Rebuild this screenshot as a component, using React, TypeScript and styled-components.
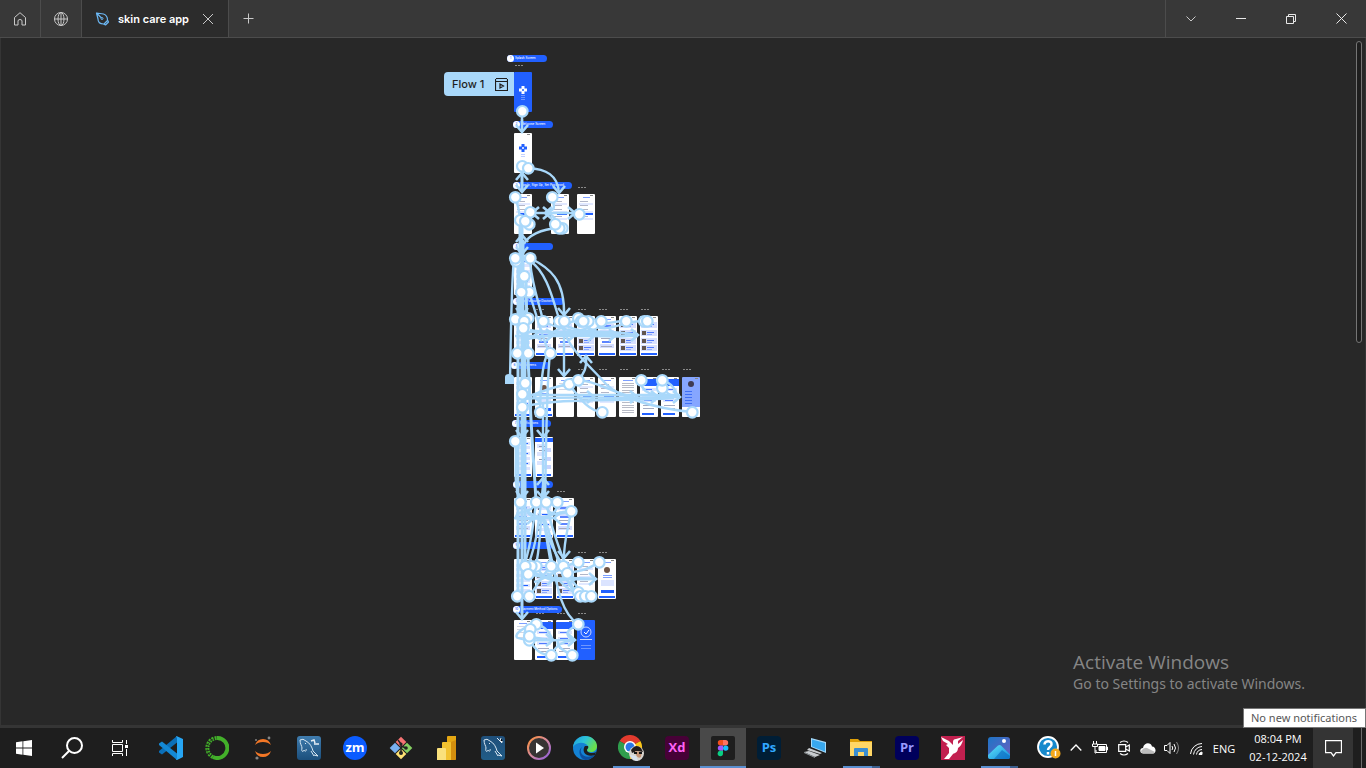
import React from "react";
import styled, { createGlobalStyle } from "styled-components";

const GlobalStyle = createGlobalStyle`
  * { box-sizing: border-box; }
  html, body, #root { height: 100%; }
  body { margin: 0; background: #282828; overflow: hidden; }
  button { font: inherit; color: inherit; border: 0; padding: 0; background: none; cursor: default; }
`;

const wire = "#a9d8fa";
const blue = "#2160ff";
const ui = `"Open Sans", "Noto Sans", sans-serif`;

const Desktop = styled.div`
  display: flex;
  flex-direction: column;
  height: 100vh;
  font-family: Inter, sans-serif;
  color: #fff;
`;

/* ---------- Title bar ---------- */

const TabBar = styled.header`
  display: flex;
  flex: none;
  height: 38px;
  background: #383838;
  border-bottom: 1px solid #4c4c4c;
`;

const BarButton = styled.button<{ $width: number; $edge?: "left" | "right" }>`
  display: flex;
  align-items: center;
  justify-content: center;
  width: ${(p) => p.$width}px;
  color: #c9c9c9;
  ${(p) => p.$edge && `border-${p.$edge}: 1px solid #4c4c4c;`}
`;

const FileTab = styled.div`
  display: flex;
  align-items: center;
  gap: 8px;
  width: 147px;
  padding: 0 14px 0 13px;
  background: #2c2c2c;
  border-right: 1px solid #4c4c4c;
`;

const FileName = styled.span`
  flex: 1;
  font-size: 11px;
  font-weight: 600;
  line-height: 16px;
  white-space: nowrap;
`;

const CloseTab = styled.button`
  display: flex;
  color: #c9c9c9;
`;

const Spacer = styled.div`
  flex: 1;
`;

const WindowControls = styled.div`
  display: flex;
  border-left: 1px solid #4c4c4c;
`;

const Line = styled.svg.attrs({ fill: "none", stroke: "currentColor", "aria-hidden": true })`
  display: block;
  flex: none;
`;

/* ---------- Canvas ---------- */

const Canvas = styled.main`
  position: relative;
  flex: 1;
  min-height: 0;
  overflow: hidden;
  background: #282828;
  border: solid #353535;
  border-width: 0 1px 3px;
`;

const Scrollbar = styled.div`
  position: absolute;
  top: 3px;
  right: 3px;
  width: 6px;
  height: 302px;
  border: 1px solid #757575;
  border-radius: 3px;
  background: #1e1e1e;
`;

const Board = styled.div`
  position: absolute;
  inset: 0;
`;

const Phone = styled.svg`
  position: absolute;
  width: 18px;
  height: 40px;
  border-radius: 1px;
`;

const SectionLabel = styled.div`
  position: absolute;
  display: flex;
  align-items: center;
  gap: 1px;
  height: 7px;
  border-radius: 4px;
  background: ${blue};
  font-size: 3px;
  font-weight: 500;
  line-height: 7px;
  white-space: nowrap;
  color: #fff;
`;

const SectionBadge = styled.span`
  flex: none;
  width: 7px;
  height: 7px;
  border-radius: 50%;
  background: #fff;
  color: ${blue};
  text-align: center;
`;

const FrameTitle = styled.span`
  position: absolute;
  width: 9px;
  height: 1px;
  background: repeating-linear-gradient(90deg, #8a8a8a 0 2px, transparent 2px 3px);
`;

const FlowStart = styled.button`
  position: absolute;
  display: flex;
  align-items: center;
  justify-content: space-between;
  width: 70px;
  height: 24px;
  padding: 0 6px 0 8px;
  border-radius: 4px 0 0 4px;
  background: ${wire};
  color: #1e1e1e;
  font-size: 11px;
  font-weight: 500;
`;

const Wires = styled.svg`
  position: absolute;
  top: 0;
  left: 0;
  pointer-events: none;
`;

const Watermark = styled.aside`
  position: absolute;
  right: 60px;
  bottom: 31px;
  color: #858585;
`;

const WatermarkTitle = styled.p`
  margin: 0;
  font-family: ${ui};
  font-size: 19px;
  line-height: 24px;
`;

const WatermarkText = styled.p`
  margin: 0;
  font-family: "Noto Sans", sans-serif;
  font-size: 14px;
  line-height: 20px;
`;

/* ---------- Taskbar ---------- */

const Taskbar = styled.footer`
  position: relative;
  display: flex;
  flex: none;
  height: 40px;
  background: #1e1e1e;
  font-family: ${ui};
`;

const SystemButton = styled.button`
  display: flex;
  align-items: center;
  justify-content: center;
  width: 48px;
`;

const Apps = styled.nav`
  display: flex;
  padding-left: 4px;
`;

const AppButton = styled.button<{ $state?: "running" | "active" | "grouped" }>`
  display: flex;
  align-items: center;
  justify-content: center;
  width: 46px;
  background: ${(p) => {
    if (p.$state === "active") return "linear-gradient(#5a8fd0, #5a8fd0) 0 38px / 100% 2px no-repeat #494949";
    if (p.$state === "running") return "linear-gradient(#5a8fd0, #5a8fd0) 5px 38px / 37px 2px no-repeat";
    if (p.$state === "grouped")
      return "linear-gradient(90deg, #5a8fd0 0 29px, #3c5f8e 29px) 5px 38px / 37px 2px no-repeat";
    return "none";
  }};
`;

const AppTile = styled.span<{ $bg: string; $fg: string; $round?: boolean }>`
  width: 24px;
  height: 24px;
  border-radius: ${(p) => (p.$round ? 12 : 4)}px;
  background: ${(p) => p.$bg};
  color: ${(p) => p.$fg};
  font-size: 13px;
  font-weight: 700;
  line-height: 22px;
  text-align: center;
`;

const Tray = styled.div`
  display: flex;
  align-items: center;
`;

const TrayButton = styled.button<{ $width?: number }>`
  display: flex;
  align-items: center;
  justify-content: center;
  width: ${(p) => p.$width ?? 24}px;
  height: 40px;
`;

const Language = styled.button`
  width: 32px;
  font-size: 11px;
`;

const Clock = styled.time`
  width: 73px;
  padding-left: 3px;
  font-size: 11px;
  line-height: 18px;
  text-align: center;
  white-space: nowrap;
`;

const Notifications = styled.button`
  display: flex;
  align-items: center;
  justify-content: center;
  width: 40px;
  height: 40px;
  margin-right: 8px;
  background: #343434;
`;

const ShowDesktop = styled.button`
  width: 5px;
  height: 40px;
  border-left: 1px solid #6b6b6b;
`;

const Tooltip = styled.div`
  position: absolute;
  right: 0;
  bottom: 40px;
  height: 20px;
  padding: 0 8px 0 7px;
  border: 1px solid #767676;
  background: #fff;
  color: #575757;
  font-family: "Noto Sans", sans-serif;
  font-size: 11px;
  line-height: 18px;
  white-space: nowrap;
`;

/* ---------- Board data (window coordinates, offset by the title bar) ---------- */

const ORIGIN = 38;

type Kind = "splash" | "welcome" | "form" | "list" | "cards" | "doctors" | "text" | "plain" | "banner" | "menu" | "profile" | "done" | "chat";

const phones: [number, number, Kind][] = [
  [513, 72, "splash"],
  [513, 133, "welcome"],
  [513, 194, "form"], [550, 194, "form"], [576, 194, "form"],
  [513, 255, "list"],
  [513, 316, "list"], [534, 316, "cards"], [555, 316, "cards"], [576, 316, "doctors"], [597, 316, "cards"], [618, 316, "doctors"], [639, 316, "doctors"],
  [513, 377, "list"], [534, 377, "profile"], [555, 377, "plain"], [576, 377, "form"], [597, 377, "form"], [618, 377, "text"], [639, 377, "banner"], [660, 377, "banner"], [681, 377, "menu"],
  [513, 437, "list"], [534, 437, "chat"],
  [513, 498, "cards"], [534, 498, "list"], [555, 498, "cards"],
  [513, 559, "list"], [534, 559, "doctors"], [555, 559, "doctors"], [576, 559, "form"], [597, 559, "profile"],
  [513, 620, "plain"], [534, 620, "banner"], [555, 620, "banner"], [576, 620, "done"],
];

const labels: [number, number, number, string][] = [
  [507, 55, 40, "Splash Screen"],
  [513, 121, 40, "Welcome Screen"],
  [513, 182, 59, "Log In, Sign Up, Set Password"],
  [513, 243, 40, ""],
  [513, 298, 51, "Top Favourite Doctors"],
  [511, 362, 39, "My Screens"],
  [512, 420, 39, "Notifications"],
  [513, 481, 40, ""],
  [513, 542, 40, ""],
  [513, 606, 49, "Payment Method Options"],
];

const titles: [number, number][] = [
  [514, 65], [577, 187],
  [535, 309], [577, 309], [598, 309], [619, 309], [640, 309],
  [577, 369], [598, 369], [619, 369], [640, 369], [661, 369], [682, 369],
  [556, 491], [577, 552], [598, 552],
  [535, 613], [556, 613], [577, 613],
];

const wires: string[] = [
  "M522 111V131", "M522 125V119",
  "M528 168C546 169 558 175 559 193",
  "M515 197C518 204 519 208 520 220", "M530 213H579", "M552 197C554 208 557 208 547 213", "M555 224C558 221 554 216 548 213",
  "M559 228C540 229 528 236 524 244",
  "M514 258C511 290 511 340 510 378",
  "M530 258C550 268 565 280 564 315", "M530 261C552 275 556 320 564 330",
  "M530 262C533 290 540 305 543 321", "M529 292C538 320 546 350 550 353",
  "M530 330C560 336 590 330 616 336", "M523 332H600", "M515 336H638", "M560 334H620", "M524 340C560 330 600 340 638 335",
  "M543 321C560 330 570 330 595 335", "M559 321C580 338 610 328 636 335", "M583 321C596 336 610 338 636 335",
  "M588 321C600 327 612 321 626 321", "M593 324C605 335 620 321 644 321",
  "M601 321C590 330 570 333 548 335", "M578 318C566 326 556 330 548 335",
  "M564 321V376", "M564 330C568 348 590 366 606 384C618 396 650 408 692 412",
  "M578 380C584 374 587 368 586 356",
  "M522 395H680", "M524 399C560 396 600 399 680 397", "M522 407C560 397 620 402 674 398",
  "M578 380C598 381 612 393 634 397", "M569 384C582 402 590 411 602 412", "M524 398C545 390 556 386 569 384",
  "M641 380C640 392 652 397 676 397", "M662 380C674 384 676 392 678 397", "M662 388C668 394 672 397 679 397",
  "M540 412C541 360 548 350 550 353C546 390 546 470 545 498", "M543 404V500",
  "M515 441C518 460 512 480 520 502",
  "M520 502C528 516 540 518 552 518", "M536 502C532 516 516 508 516 518H556", "M546 502C546 512 550 517 571 511",
  "M557 502C560 512 545 520 534 518", "M571 511C552 512 545 522 514 518", "M571 511C568 530 564 540 564 558",
  "M524 566C540 580 560 580 596 579", "M528 574C560 582 570 576 596 579", "M536 566C548 588 560 578 574 579", "M551 566C556 582 570 590 580 596",
  "M563 566C566 580 570 590 578 592", "M578 562C560 566 546 580 534 582", "M599 562C588 570 580 571 567 573", "M567 573C574 584 580 592 591 596",
  "M536 502C532 540 526 560 524 566", "M544 518C546 540 550 556 551 566", "M543 518C548 545 560 560 563 566",
  "M541 518C540 545 537 560 536 566", "M545 520C556 550 560 585 585 596", "M543 520C556 570 556 610 578 624",
  "M544 478C538 530 536 550 524 574", "M543 480C548 530 566 560 567 573",
  "M529 596C535 590 540 578 551 566",
  "M536 624C520 628 513 636 518 638C528 642 544 640 552 640", "M530 629C520 632 522 637 552 640", "M529 640C536 650 540 655 551 655",
  "M529 636C545 642 560 640 574 640", "M536 624C546 626 550 634 553 640", "M551 655C556 646 560 642 574 640", "M572 655C562 650 556 646 558 641", "M578 624C568 630 562 634 574 640",
];

const trunk: string[] = [
  "M522 222V618", "M523 240V500", "M518 262V596", "M522 172V190",
  "M526 276C527 380 533 450 536 500", "M525 320V566", "M520 222V320",
];

const arrows: [number, number, "up" | "down" | "left" | "right"][] = [
  [522, 132, "down"], [522, 173, "up"], [522, 192, "down"], [559, 193, "down"], [532, 213, "left"], [550, 213, "right"], [545, 213, "left"], [575, 213, "right"],
  [522, 235, "up"], [522, 254, "down"], [564, 315, "down"], [564, 376, "down"], [586, 356, "up"], [522, 315, "down"],
  [553, 335, "right"], [595, 335, "right"], [616, 335, "right"], [638, 335, "right"], [535, 335, "left"], [575, 335, "right"],
  [680, 397, "right"], [658, 397, "right"], [637, 397, "right"], [534, 397, "left"], [594, 397, "right"],
  [543, 437, "down"], [522, 437, "down"], [543, 478, "up"], [543, 498, "down"], [522, 498, "down"],
  [534, 518, "right"], [554, 518, "left"], [564, 558, "down"], [596, 579, "right"], [575, 579, "right"], [554, 579, "right"],
  [522, 619, "down"], [553, 640, "right"], [575, 640, "right"],
];

const dots: [number, number][] = [
  [522, 111], [522, 166], [528, 168], [515, 197], [552, 197], [520, 220], [529, 224], [530, 212], [525, 221], [579, 214],
  [562, 228], [559, 228], [555, 224],
  [516, 261], [515, 258], [530, 258], [524, 276], [529, 292], [521, 292],
  [515, 319], [528, 318], [524, 321], [523, 328], [543, 321], [559, 321], [564, 321], [578, 318], [593, 324], [588, 321], [581, 321], [583, 321],
  [601, 321], [626, 321], [644, 321], [647, 321], [517, 353], [528, 353], [550, 353],
  [525, 383], [522, 394], [522, 407], [540, 412], [569, 384], [578, 380], [662, 388], [641, 380], [662, 380], [602, 412], [692, 412],
  [515, 441], [520, 502], [536, 502], [546, 502], [557, 502], [571, 511],
  [536, 566], [531, 566], [525, 566], [528, 574], [551, 566], [563, 566], [567, 573], [578, 562], [599, 562],
  [517, 596], [529, 596], [578, 592], [580, 596], [585, 596], [591, 596],
  [529, 640], [536, 624], [530, 629], [529, 636], [551, 655], [572, 655], [578, 624],
];

const headings = { up: 0, right: 90, down: 180, left: 270 };

const Cross = ({ color, y }: { color: string; y: number }) => (
  <g fill={color} transform={`translate(9 ${y})`}>
    <path d="M-1.500-4h3v2.500H4v3H1.500V4h-3V1.500H-4v-3h2.500z" />
    <circle r="1" fill={color === "#fff" ? blue : "#fff"} />
  </g>
);

const rows = (ys: number[], x: number, w: number, h: number, fill: string) =>
  ys.map((y) => <rect key={y} x={x} y={y} width={w} height={h} fill={fill} />);

const PhoneArt = ({ kind }: { kind: Kind }) => {
  const dark = kind === "splash" || kind === "done";
  const bg = dark ? blue : kind === "menu" ? "#86a6ff" : "#fff";
  const body: Record<Kind, React.ReactNode> = {
    splash: <><Cross color="#fff" y={18} />{rows([23, 25, 27], 7, 4, 1, "#6e94ff")}</>,
    welcome: <><Cross color={blue} y={15} />{rows([21, 23], 7, 4, 1, "#c4d3ff")}{rows([32], 5, 8, 2, "#dfe7ff")}</>,
    form: <>{rows([3], 6, 7, 1, "#7d9fff")}{rows([7, 11, 15, 22], 3, 8, 1, "#b2b6c8")}{rows([9, 17, 24], 2, 14, 2, "#e1e8ff")}{rows([19], 6, 10, 2, blue)}</>,
    list: <>{rows([5, 9, 15, 20, 25, 30], 2, 14, 3, "#dbe4ff")}{rows([6, 10, 16, 21, 26, 31], 3, 2, 2, "#6a6f86")}{rows([6, 16, 26], 7, 7, 1, blue)}{rows([37], 1, 16, 2, blue)}</>,
    cards: <>{rows([3], 5, 8, 1, "#7d9fff")}{rows([8, 14, 28], 2, 14, 4, "#d4deff")}{rows([9, 18, 25], 4, 9, 2, "#5d85ff")}{rows([22, 30], 3, 11, 1, "#a4a9bd")}{rows([37], 1, 16, 2, blue)}</>,
    doctors: <>{rows([3], 5, 8, 1, "#7d9fff")}{rows([6, 14, 22, 29], 1, 16, 6, "#d7e0ff")}{rows([7, 15, 23, 30], 2, 4, 4, "#62564f")}{rows([8, 16, 24, 31], 7, 7, 1, "#4f7aff")}{rows([10, 18, 26, 33], 7, 5, 1, "#8fabff")}{rows([37], 1, 16, 2, blue)}</>,
    text: <>{rows([3], 4, 10, 1, "#7d9fff")}{rows([6, 8, 10, 13, 15, 18, 20, 23, 25, 28, 30, 33, 35], 3, 12, 1, "#b8bbc6")}</>,
    plain: <>{rows([3], 5, 8, 1, "#7d9fff")}{rows([6, 9, 12, 17], 3, 11, 1, "#d3d7e4")}</>,
    banner: <>{rows([2], 0, 18, 7, blue)}{rows([11, 17, 22], 2, 14, 3, "#dbe4ff")}{rows([12, 18, 23], 4, 8, 1, "#4f7aff")}{rows([28, 31], 3, 11, 1, "#a4abc2")}{rows([36], 2, 12, 2, blue)}</>,
    menu: <>{rows([30], 0, 18, 10, "#fff")}<circle cx="9" cy="7" r="3" fill="#3f3b52" />{rows([14, 17, 20, 23, 26], 3, 7, 1, "#3f6ff5")}</>,
    profile: <>{rows([3], 5, 8, 1, "#7d9fff")}<circle cx="9" cy="11" r="3" fill="#6e5547" />{rows([16, 18], 5, 9, 1, "#7d9fff")}{rows([21], 3, 13, 6, "#dbe4ff")}{rows([31], 3, 13, 3, blue)}{rows([37], 1, 16, 2, blue)}</>,
    chat: <>{rows([1], 0, 18, 4, blue)}{rows([7, 15, 24], 2, 8, 4, "#dbe4ff")}{rows([11, 20, 28], 8, 8, 4, "#c5d3ff")}{rows([9, 13, 22], 4, 8, 1, "#8f96ae")}{rows([37], 2, 14, 2, blue)}</>,
    done: <><circle cx="9" cy="12" r="5" fill="none" stroke="#c7d6ff" /><path d="M7 12l2 2 3-4" fill="none" stroke="#fff" />{rows([19], 3, 12, 1, "#c7d6ff")}{rows([25, 28], 4, 10, 1, "#6f96ff")}</>,
  };
  return (
    <>
      <rect width="18" height="40" fill={bg} />
      {!dark && <rect x="13" y="1" width="3" height="1" fill="#888" />}
      {body[kind]}
    </>
  );
};

const Prototype = () => (
  <Board>
    {phones.map(([x, y, kind]) => (
      <Phone key={`${x}-${y}`} viewBox="0 0 18 40" style={{ left: x, top: y - ORIGIN }}>
        <PhoneArt kind={kind} />
      </Phone>
    ))}
    {titles.map(([x, y]) => (
      <FrameTitle key={`${x}-${y}`} style={{ left: x, top: y - ORIGIN }} />
    ))}
    {labels.map(([x, y, w, text], i) => (
      <SectionLabel key={y} style={{ left: x - 1, top: y - ORIGIN, width: w }}>
        <SectionBadge>{i + 1}</SectionBadge>
        {text}
      </SectionLabel>
    ))}
    <FlowStart style={{ left: 443, top: 72 - ORIGIN }}>
      Flow 1
      <Line width="13" height="13" viewBox="0 0 13 13">
        <path d="M1 .5h11M.5 3.500h12v9H.5zM.5 3.500V1M12.500 3.500V1M5 6v4l3.500-2z" strokeWidth="1.200" />
      </Line>
    </FlowStart>
    <Wires width="720" height="687" viewBox="1 38 720 687" fill="none" stroke={wire}>
      <g strokeWidth="2.400">{wires.map((d) => <path key={d} d={d} />)}</g>
      <g strokeWidth="3">{trunk.map((d) => <path key={d} d={d} />)}</g>
      <g strokeWidth="2.600">
        {arrows.map(([x, y, to]) => (
          <path key={`${x}-${y}-${to}`} d="M-6 7L0 0L6 7" transform={`translate(${x} ${y}) rotate(${headings[to]})`} />
        ))}
      </g>
      <path d="M505 384v-7q0-3 4-3t5 3v7z" fill={wire} stroke="none" />
      <g fill="#fff" strokeWidth="2.200">
        {dots.map(([x, y]) => <circle key={`${x}-${y}`} cx={x + 0.3} cy={y + 0.3} r="5.300" />)}
      </g>
    </Wires>
  </Board>
);

/* ---------- Icons ---------- */

const Dolphin = ({ id, flip }: { id: string; flip?: boolean }) => (
  <svg width="24" height="24" viewBox="0 0 24 24">
    <defs>
      <linearGradient id={id} x1="0" y1="0" x2="0" y2="1">
        <stop offset="0" stopColor={flip ? "#1f4f7a" : "#3f7cae"} />
        <stop offset="1" stopColor={flip ? "#215c86" : "#1b4f7c"} />
      </linearGradient>
    </defs>
    <rect width="24" height="24" rx="3" fill={`url(#${id})`} />
    <path d="M3 4q3-2 6 1c4 2 6 6 7 10l5 5-4-1M3 4c0 4 2 6 2 8-1 3 1 5 2 2 1 2 3 1 2-1M8 7l1 1M14 15l3 5" fill="none" stroke="#d8e7f2" />
    {flip ? <path d="M16 2l5 5M20 2l-1 3 3 1" stroke="#e6eef5" /> : <path d="M14 5l3-1 1 3M17 8h5" stroke="#e6eef5" strokeWidth="1.500" fill="none" />}
  </svg>
);

const StartIcon = () => (
  <svg width="16" height="16" viewBox="0 0 16 16" fill="#fff">
    <path d="M0 2.200L6.500 1.300V7.600H0zM7.300 1.200L16 0V7.600H7.300zM0 8.400H6.500V14.700L0 13.800zM7.300 8.400H16V16L7.300 14.800z" />
  </svg>
);

const TaskViewIcon = () => (
  <Line width="16" height="16" viewBox="0 0 16 16">
    <path d="M.5 0v2.500h10V0M.5 4.500h10v7H.5zM.5 16v-2.500h10V16M14.500 0v4M14.500 9v7" />
    <path d="M13 5h3v3h-3z" fill="#fff" stroke="none" />
  </Line>
);

const CodeIcon = () => (
  <svg width="24" height="24" viewBox="0 0 24 24">
    <path d="M18 0v6.500L3 18.500 0 16.500V15z" fill="#0b6fb8" />
    <path d="M18 24v-6.500L3 5.500 0 7.500V9z" fill="#1488d4" />
    <path d="M17 0l1 .2 6 2.800v18l-6 3-1-.3 1-1.500V2z" fill="#27a6f4" />
  </svg>
);

const AnacondaIcon = () => (
  <svg width="24" height="24" viewBox="0 0 24 24" fill="none" stroke="#43b02a">
    <path d="M12 2a10 10 0 1 1-4 19" strokeWidth="4" />
    <path d="M8 21A10 10 0 0 1 12 2" strokeWidth="4" strokeDasharray="2 1" />
    <path d="M5 19A9.500 9.500 0 0 1 9 3" stroke="#1e1e1e" strokeDasharray="1 2" />
  </svg>
);

const JupyterIcon = () => (
  <svg width="20" height="24" viewBox="0 0 20 24">
    <path d="M2 9Q4 3 10 3t8 6Q15 6 10 6T2 9zM2 15q2 6 8 6t8-6q-3 3-8 3t-8-3z" fill="#f37726" />
    <g fill="#858585"><circle cx="16" cy="2" r="1.400" /><circle cx="4" cy="22" r="1.600" /><circle cx="3" cy="4" r="1" /></g>
  </svg>
);

const GitIcon = () => (
  <svg width="24" height="24" viewBox="0 0 24 24">
    <g transform="rotate(45 12 12)">
      <rect x="4" y="4" width="7.500" height="7.500" fill="#f57373" />
      <rect x="12.500" y="4" width="7.500" height="7.500" fill="#85cf62" />
      <rect x="12.500" y="12.500" width="7.500" height="7.500" fill="#ffe274" />
      <rect x="4" y="12.500" width="7.500" height="7.500" fill="#78b0f0" />
    </g>
    <path d="M9 4l3 4v9M12 10l5 2" fill="none" stroke="#222" strokeWidth="1.500" />
    <g fill="#222"><circle cx="12" cy="8" r="1.600" /><circle cx="12" cy="17" r="2" /><circle cx="17" cy="12" r="1.800" /></g>
  </svg>
);

const PowerBiIcon = () => (
  <svg width="20" height="24" viewBox="0 0 20 24">
    <path d="M10 1q0-1 1-1h8v23q0 1-1 1h-8z" fill="#e5a713" />
    <path d="M14 6l5-2v20h-5z" fill="#c77f0b" opacity=".6" />
    <path d="M5 7q0-1 1-1h7q1 0 1 1v17H5z" fill="#f2c230" />
    <path d="M0 13q0-1 1-1h7q1 0 1 1v11H0z" fill="#fae17c" />
  </svg>
);

const PlayerIcon = () => (
  <svg width="24" height="24" viewBox="0 0 24 24">
    <defs>
      <linearGradient id="ring" x1="0" y1="0" x2="1" y2="1">
        <stop offset="0" stopColor="#ff9136" /><stop offset=".5" stopColor="#d58aa0" /><stop offset="1" stopColor="#8a5ae0" />
      </linearGradient>
    </defs>
    <circle cx="12" cy="12" r="11" fill="#373434" stroke="url(#ring)" strokeWidth="2" />
    <path d="M9 6.500v11l8-5.500z" fill="#fff" />
  </svg>
);

const EdgeIcon = () => (
  <svg width="24" height="24" viewBox="0 0 24 24">
    <defs>
      <linearGradient id="edgeTop" x1="0" y1="0" x2="1" y2=".5">
        <stop offset="0" stopColor="#1e9de0" /><stop offset=".5" stopColor="#2dc4d8" /><stop offset="1" stopColor="#6be04a" />
      </linearGradient>
    </defs>
    <circle cx="12" cy="12" r="12" fill="#1482d4" />
    <path d="M0 11C1 4 6 0 12 0c7 0 12 5 12 10 0 4-3 6-6 6-3 0-4-1-4-2s2-2 1-4c-2-4-11-5-15 1z" fill="url(#edgeTop)" />
    <path d="M9 11c-4 6 2 13 13 8-3 4-7 5-10 5C7 23 4 14 9 11z" fill="#0c4f9e" />
    <path d="M15 10c1 2-1 3-1 4s1 3 5 3q3 0 4-1l-1 3c-4 2-10 0-11-3-1-2 0-5 1-6z" fill="#1e1e1e" />
  </svg>
);

const ChromeIcon = () => (
  <svg width="27" height="26" viewBox="0 0 27 26">
    <path d="M12 12L1.600 6A12 12 0 0 1 22.400 6z" fill="#e33b2e" />
    <path d="M12 12L1.600 6A12 12 0 0 0 12 24z" fill="#2f9e4d" />
    <path d="M12 12L12 24A12 12 0 0 0 22.400 6z" fill="#fbc618" />
    <path d="M12 6h10.400L12 7z" fill="#e33b2e" />
    <circle cx="12" cy="12" r="6" fill="#fff" /><circle cx="12" cy="12" r="4.500" fill="#2b76e5" />
    <circle cx="18.500" cy="18.500" r="7.500" fill="#d9d5cf" />
    <path d="M13 15q5-7 10-2l2 4-6-1-5 2z" fill="#211b1a" />
    <path d="M17 16l7 1-1 5q-3 2-5-2z" fill="#c49374" />
    <path d="M16 17h3v2h-3zM21 17h3v2h-3z" fill="#161616" />
    <path d="M12 20l6 1 2 5q-5 0-8-6z" fill="#d8e2ee" />
  </svg>
);

const FigmaIcon = () => (
  <svg width="24" height="24" viewBox="0 0 24 24">
    <rect width="24" height="24" rx="2" fill="#1e1e1e" />
    <path d="M12 4H9.500a2.700 2.700 0 0 0 0 5.400H12z" fill="#f24e1e" />
    <path d="M12 4h2.500a2.700 2.700 0 0 1 0 5.400H12z" fill="#ff7262" />
    <path d="M12 9.400H9.500a2.700 2.700 0 0 0 0 5.400H12z" fill="#a259ff" />
    <circle cx="14.700" cy="12.100" r="2.700" fill="#1abcfe" />
    <path d="M12 14.800H9.500a2.700 2.700 0 1 0 2.500 2.700z" fill="#0acf83" />
  </svg>
);

const RemoteIcon = () => (
  <svg width="24" height="22" viewBox="0 0 24 22">
    <path d="M8 1l15 4v11L8 10z" fill="#a6d9f8" /><path d="M9 2.500l13 3.500v8.500L9 9.500z" fill="#38a8ee" />
    <path d="M6 11l13 5-2 1-13-4zM1 15l5-1 11 4-5 2z" fill="#c9cdd0" /><path d="M1 15l11 5v1L1 16z" fill="#8d9498" />
  </svg>
);

const ExplorerIcon = () => (
  <svg width="22" height="20" viewBox="0 0 22 20">
    <path d="M0 1h8l2 2h12v5H0z" fill="#dfa008" /><path d="M0 4h22v14H0z" fill="#ffd766" />
    <path d="M4 11q0-1 1-1h12q1 0 1 1v7h-4v-4H8v4H4z" fill="#3b8ed0" />
  </svg>
);

const BirdIcon = () => (
  <svg width="24" height="24" viewBox="0 0 24 24">
    <path d="M0 0h24v24H0z" fill="#c2204f" />
    <path d="M0 1l8 4 4 4V6q0-3 3-3l7-2-5 4v3l5-4q-1 5-5 8c0 4-3 5-5 6l-4 5H3l5-6V12L5 9l2-1-5-3z" fill="#fff" />
  </svg>
);

const PhotosIcon = () => (
  <svg width="22" height="22" viewBox="0 0 22 22">
    <defs>
      <linearGradient id="sky" x1="0" y1="0" x2="1" y2="1"><stop offset="0" stopColor="#1d74c6" /><stop offset="1" stopColor="#6d5fc0" /></linearGradient>
      <linearGradient id="hill" x1="0" y1="0" x2="1" y2="1"><stop offset="0" stopColor="#62e2f8" /><stop offset="1" stopColor="#128ede" /></linearGradient>
    </defs>
    <rect width="22" height="22" rx="3" fill="url(#sky)" />
    <path d="M0 18L10 8.500q2-1 3 0l9 9V20q0 2-2 2H2q-2 0-2-2z" fill="url(#hill)" />
    <path d="M6 22l8-9 8 6v1q0 2-2 2z" fill="#0b67bd" opacity=".6" />
    <circle cx="16" cy="4" r="2" fill="#fff" />
  </svg>
);

const HelpIcon = () => (
  <svg width="24" height="24" viewBox="0 0 24 24">
    <circle cx="11" cy="11" r="10" fill="#1689cc" stroke="#fff" strokeWidth="1.800" />
    <path d="M7.500 8.500C7.500 4 15 4 14.500 8.500c0 2.500-3.500 2.500-3.500 5.500M11 16v2.500" fill="none" stroke="#fff" strokeWidth="2.500" />
    <circle cx="18.500" cy="17.500" r="5" fill="#f5a81c" /><path d="M18.500 15v5" stroke="#fff" strokeWidth="1.500" />
  </svg>
);

const apps: { name: string; icon: React.ReactNode; state?: "running" | "active" | "grouped" }[] = [
  { name: "Visual Studio Code", icon: <CodeIcon /> },
  { name: "Anaconda", icon: <AnacondaIcon /> },
  { name: "Jupyter", icon: <JupyterIcon /> },
  { name: "MySQL Workbench", icon: <Dolphin id="sea" /> },
  { name: "Zoom", icon: <AppTile $bg="#0b5cff" $fg="#fff" $round>zm</AppTile> },
  { name: "Git", icon: <GitIcon /> },
  { name: "Power BI", icon: <PowerBiIcon /> },
  { name: "MySQL", icon: <Dolphin id="deep" flip /> },
  { name: "Media Player", icon: <PlayerIcon /> },
  { name: "Edge", icon: <EdgeIcon /> },
  { name: "Chrome", icon: <ChromeIcon />, state: "running" },
  { name: "Adobe XD", icon: <AppTile $bg="#470137" $fg="#ff61f6">Xd</AppTile> },
  { name: "Figma", icon: <FigmaIcon />, state: "active" },
  { name: "Photoshop", icon: <AppTile $bg="#001e36" $fg="#31a8ff">Ps</AppTile> },
  { name: "Remote Desktop", icon: <RemoteIcon /> },
  { name: "File Explorer", icon: <ExplorerIcon />, state: "grouped" },
  { name: "Premiere Pro", icon: <AppTile $bg="#00005b" $fg="#9999ff">Pr</AppTile> },
  { name: "Hummingbird", icon: <BirdIcon /> },
  { name: "Photos", icon: <PhotosIcon />, state: "grouped" },
];

export default function App() {
  return (
    <Desktop>
      <GlobalStyle />
      <TabBar>
        <BarButton $width={41} $edge="right" aria-label="Home">
          <Line width="12" height="14" viewBox="0 0 12 14">
            <path d="M.5 5.500L6 .7l5.500 4.800v7.500H8V9q0-1.500-2-1.500T4 9v4H.5z" strokeLinejoin="round" />
          </Line>
        </BarButton>
        <BarButton $width={41} $edge="right" aria-label="Community">
          <Line width="14" height="14" viewBox="0 0 14 14">
            <circle cx="7" cy="7" r="6.500" /><ellipse cx="7" cy="7" rx="3" ry="6.500" /><path d="M.5 7h13M7 .5v13" />
          </Line>
        </BarButton>
        <FileTab>
          <Line width="15" height="14" viewBox="0 0 15 14">
            <path d="M1.500 1l7 1c3 1 4 4 4 6l1 2-3 3-2-1C5 12 3 10 3 7zM1.500 1l5 5M12.500 8.500l-4 4" stroke="#6cb8f5" strokeWidth="1.200" strokeLinejoin="round" />
            <circle cx="7" cy="6.500" r="1" stroke="#6cb8f5" />
          </Line>
          <FileName>skin care app</FileName>
          <CloseTab aria-label="Close tab">
            <Line width="12" height="12" viewBox="0 0 12 12"><path d="M1 1l10 10M11 1L1 11" /></Line>
          </CloseTab>
        </FileTab>
        <BarButton $width={38} aria-label="New tab">
          <Line width="11" height="11" viewBox="0 0 11 11"><path d="M5.500 .5v10M.5 5.500h10" /></Line>
        </BarButton>
        <Spacer />
        <WindowControls>
          <BarButton $width={50} aria-label="Tab list"><Line width="10" height="6" viewBox="0 0 10 6"><path d="M.5 .5L5 5 9.500 .5" /></Line></BarButton>
          <BarButton $width={50} aria-label="Minimise"><Line width="10" height="3" viewBox="0 0 10 3"><path d="M0 1.500h10" stroke="#e8e8e8" /></Line></BarButton>
          <BarButton $width={50} aria-label="Restore"><Line width="10" height="10" viewBox="0 0 10 10"><path d="M.5 2.500h7v7h-7zM2.500 2V.5h7v7H8" stroke="#e8e8e8" /></Line></BarButton>
          <BarButton $width={50} aria-label="Close"><Line width="11" height="11" viewBox="0 0 11 11"><path d="M.5 .5l10 10M10.500 .5l-10 10" stroke="#e8e8e8" /></Line></BarButton>
        </WindowControls>
      </TabBar>

      <Canvas>
        <Prototype />
        <Watermark>
          <WatermarkTitle>Activate Windows</WatermarkTitle>
          <WatermarkText>Go to Settings to activate Windows.</WatermarkText>
        </Watermark>
        <Scrollbar />
      </Canvas>

      <Taskbar>
        <SystemButton aria-label="Start"><StartIcon /></SystemButton>
        <SystemButton aria-label="Search">
          <Line width="22" height="22" viewBox="0 0 22 22" strokeWidth="2"><circle cx="13.500" cy="8.500" r="7.500" /><path d="M8 14l-7 7" /></Line>
        </SystemButton>
        <SystemButton aria-label="Task view"><TaskViewIcon /></SystemButton>
        <Apps>
          {apps.map((app) => (
            <AppButton key={app.name} aria-label={app.name} $state={app.state}>{app.icon}</AppButton>
          ))}
        </Apps>
        <Spacer />
        <Tray>
          <TrayButton $width={30} aria-label="Help"><HelpIcon /></TrayButton>
          <TrayButton aria-label="Hidden icons"><Line width="12" height="8" viewBox="0 0 12 8"><path d="M.7 6.500L6 1l5.300 5.500" strokeWidth="1.300" /></Line></TrayButton>
          <TrayButton aria-label="Battery">
            <Line width="16" height="14" viewBox="0 0 16 14">
              <path d="M6 3.500h8.500v8H4V9M14.500 6h1v3h-1" /><path d="M7 5.500h6v4H7z" fill="#fff" />
              <path d="M1.500 0v3M4.500 0v3M.5 3h5v2.500h-5zM3 6v6h1" />
            </Line>
          </TrayButton>
          <TrayButton aria-label="Meet now">
            <Line width="12" height="16" viewBox="0 0 12 16"><path d="M.7 4.700h7v6.600h-7zM7.700 7l3.600-2v6l-3.600-2M2 2.500Q6-.5 10 2.500M2 13.500q4 3 8 0" strokeWidth="1.200" /></Line>
          </TrayButton>
          <TrayButton aria-label="OneDrive">
            <svg width="16" height="11" viewBox="0 0 16 11"><path d="M3.500 10.500C-1 10.500-.5 5 3 5c1-6 8-6 9-1.500 4 0 5 6.500 1 7z" fill="#fff" /><path d="M1 8q3-4 6-3l8 4q-1 1.500-2 1.500H3q-2-.5-2-2.500z" fill="#bdbdbd" /></svg>
          </TrayButton>
          <TrayButton aria-label="Volume">
            <Line width="16" height="14" viewBox="0 0 16 14"><path d="M.5 4.500h2.500l3-3v11l-3-3H.5zM8 5q1.500 2 0 4M10 3q3 4 0 8" /><path d="M12.500 1q4 6 0 12" stroke="#888" /></Line>
          </TrayButton>
          <TrayButton aria-label="Network">
            <Line width="13" height="13" viewBox="0 0 13 13"><path d="M.5 12A11.500 11.500 0 0 1 12 1.500M3.500 12.500A9 9 0 0 1 12 4.500M6.500 12.500A6 6 0 0 1 12 7.500" /><path d="M9 12.500a3.500 3.500 0 0 1 3-2.500v2.500z" fill="#fff" /></Line>
          </TrayButton>
          <Language>ENG</Language>
          <Clock>08:04 PM<br />02-12-2024</Clock>
          <Notifications aria-label="Notifications">
            <Line width="17" height="17" viewBox="0 0 17 17"><path d="M.5 .7h16v12H11L8.500 16 6 12.700H.5z" strokeWidth="1.300" /></Line>
          </Notifications>
          <ShowDesktop aria-label="Show desktop" />
        </Tray>
        <Tooltip role="tooltip">No new notifications</Tooltip>
      </Taskbar>
    </Desktop>
  );
}
